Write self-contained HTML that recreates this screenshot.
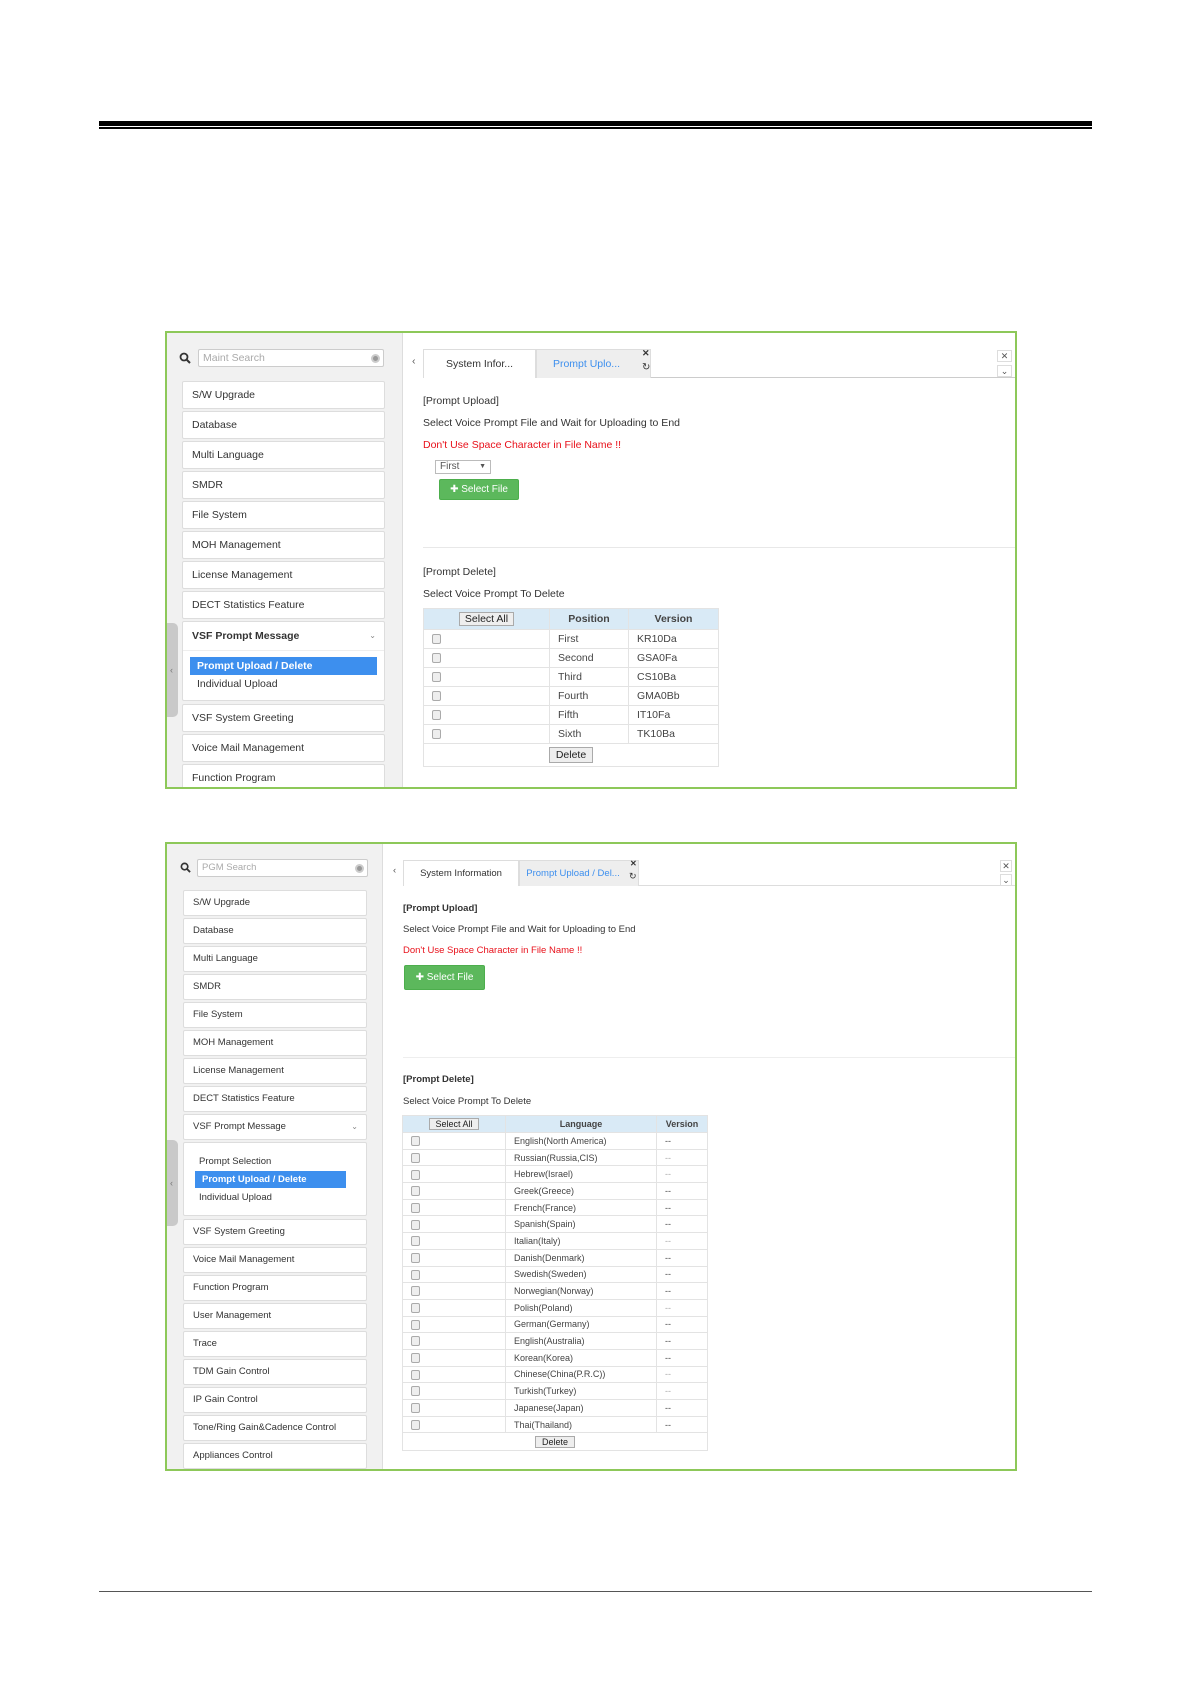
<!DOCTYPE html>
<html><head><meta charset="utf-8"><style>
*{box-sizing:border-box;margin:0;padding:0}
body{width:1191px;height:1684px;background:#fff;position:relative;font-family:"Liberation Sans",Arial,sans-serif;color:#333;overflow:hidden}
.a{position:absolute}
.panel{position:absolute;left:165px;width:852px;border:2px solid #8dc859;overflow:hidden;background:#fff}
.side{position:absolute;left:0;top:0;bottom:0;background:#f1f1f1;border-right:1px solid #ddd}
.srch{position:absolute;background:#fff;border:1px solid #ccc;border-radius:2px;color:#aaa;padding-left:4px}
.srch i{position:absolute;right:3px;top:4px;width:9px;height:9px;border-radius:50%;background:#999;border:2px solid #ccc}
.mi{position:absolute;background:#fff;border:1px solid #ddd;border-radius:2px;padding-left:9px;color:#333}
.hl{position:absolute;background:#3d8fee;color:#fff;font-weight:bold;padding-left:7px}
.handle{position:absolute;left:-2px;width:13px;background:#c9c9c9;border-radius:0 5px 5px 0;color:#777;font-size:9px;text-align:center}
.tab{position:absolute;border:1px solid #ddd;border-bottom:none;background:#fff;text-align:center}
.tab2{background:#eee;color:#3d8fee}
.cb{position:absolute;width:15px;height:12px;border:1px solid #ddd;font-size:9px;text-align:center;line-height:10px;color:#555}
.t{position:absolute;white-space:nowrap}
.red{color:#e8101a}
.btn{position:absolute;background:#5cb85c;border:1px solid #4cae4c;border-radius:2px;color:#fff;text-align:center}
table{position:absolute;border-collapse:collapse;background:#fff}
td,th{border:1px solid #e3e3e3;padding:0 0 0 8px;text-align:left;font-weight:normal;color:#444}
th{background:#d9eaf6;font-weight:bold;text-align:center;padding:0}
.chk{display:inline-block;width:9px;height:10px;border:1px solid #aaa;border-radius:2px;background:#eee;vertical-align:middle}
.gb{display:inline-block;background:#eee;border:1px solid #aaa;padding:0 5px;font-weight:normal;color:#222}
</style></head><body>
<div class="a" style="left:99px;top:121px;width:993px;height:5px;background:#000"></div>
<div class="a" style="left:99px;top:127px;width:993px;height:2px;background:#000"></div>
<div class="a" style="left:99px;top:1591px;width:993px;height:1px;background:#555"></div>

<!-- PANEL 1 -->
<div class="panel" style="top:331px;height:458px;font-size:10.5px">
 <div class="side" style="width:236px"></div>
 <svg class="a" style="left:12px;top:19px" width="12" height="12" viewBox="0 0 12 12"><circle cx="5" cy="5" r="3.5" fill="none" stroke="#333" stroke-width="1.8"/><line x1="7.5" y1="7.5" x2="11" y2="11" stroke="#333" stroke-width="2"/></svg>
 <div class="srch" style="left:31px;top:16px;width:186px;height:18px;line-height:16px">Maint Search<i></i></div>
 <div class="mi" style="left:15px;top:48px;width:203px;height:28px;line-height:26px">S/W Upgrade</div>
 <div class="mi" style="left:15px;top:78px;width:203px;height:28px;line-height:26px">Database</div>
 <div class="mi" style="left:15px;top:108px;width:203px;height:28px;line-height:26px">Multi Language</div>
 <div class="mi" style="left:15px;top:138px;width:203px;height:28px;line-height:26px">SMDR</div>
 <div class="mi" style="left:15px;top:168px;width:203px;height:28px;line-height:26px">File System</div>
 <div class="mi" style="left:15px;top:198px;width:203px;height:28px;line-height:26px">MOH Management</div>
 <div class="mi" style="left:15px;top:228px;width:203px;height:28px;line-height:26px">License Management</div>
 <div class="mi" style="left:15px;top:258px;width:203px;height:28px;line-height:26px">DECT Statistics Feature</div>
 <div class="mi" style="left:15px;top:288px;width:203px;height:80px"><div style="font-weight:bold;line-height:28px;border-bottom:1px solid #eee;margin-left:-9px;padding-left:9px">VSF Prompt Message<span style="position:absolute;right:8px;font-weight:normal;font-size:8px;color:#888">&#8964;</span></div></div>
 <div class="hl" style="left:23px;top:324px;width:187px;height:18px;line-height:18px">Prompt Upload / Delete</div>
 <div class="t" style="left:30px;top:345px">Individual Upload</div>
 <div class="mi" style="left:15px;top:371px;width:203px;height:28px;line-height:26px">VSF System Greeting</div>
 <div class="mi" style="left:15px;top:401px;width:203px;height:28px;line-height:26px">Voice Mail Management</div>
 <div class="mi" style="left:15px;top:431px;width:203px;height:28px;line-height:26px">Function Program</div>
 <div class="handle" style="top:290px;height:94px;line-height:94px">&#8249;</div>

 <div class="t" style="left:245px;top:22px;color:#555">&#8249;</div>
 <div class="a" style="left:256px;top:44px;width:592px;height:1px;background:#ccc"></div>
 <div class="tab" style="left:256px;top:16px;width:113px;height:29px;line-height:28px">System Infor...</div>
 <div class="tab tab2" style="left:369px;top:16px;width:115px;height:29px;line-height:28px;padding-right:14px">Prompt Uplo...</div>
 <div class="t" style="left:475px;top:15px;font-size:9px;font-weight:bold">&#10005;</div>
 <div class="t" style="left:475px;top:29px;font-size:10px">&#8635;</div>
 <div class="cb" style="left:830px;top:17px">&#10005;</div>
 <div class="cb" style="left:830px;top:32px">&#8964;</div>

 <div class="t" style="left:256px;top:62px">[Prompt Upload]</div>
 <div class="t" style="left:256px;top:84px">Select Voice Prompt File and Wait for Uploading to End</div>
 <div class="t red" style="left:256px;top:106px">Don't Use Space Character in File Name !!</div>
 <div class="a" style="left:268px;top:127px;width:56px;height:14px;border:1px solid #bbb;font-size:10px;line-height:12px;padding-left:4px;color:#555">First<span style="position:absolute;right:4px;font-size:7px">&#9660;</span></div>
 <div class="btn" style="left:272px;top:146px;width:80px;height:21px;line-height:19px;font-size:10px">&#10010; Select File</div>
 <div class="a" style="left:256px;top:214px;width:594px;height:1px;background:#e8e8e8"></div>
 <div class="t" style="left:256px;top:233px">[Prompt Delete]</div>
 <div class="t" style="left:256px;top:255px">Select Voice Prompt To Delete</div>
 <table style="left:256px;top:275px;width:296px;font-size:10.5px">
  <tr style="height:21px"><th style="width:126px"><span class="gb">Select All</span></th><th style="width:79px">Position</th><th>Version</th></tr>
  <tr style="height:19px"><td><span class="chk"></span></td><td>First</td><td>KR10Da</td></tr>
  <tr style="height:19px"><td><span class="chk"></span></td><td>Second</td><td>GSA0Fa</td></tr>
  <tr style="height:19px"><td><span class="chk"></span></td><td>Third</td><td>CS10Ba</td></tr>
  <tr style="height:19px"><td><span class="chk"></span></td><td>Fourth</td><td>GMA0Bb</td></tr>
  <tr style="height:19px"><td><span class="chk"></span></td><td>Fifth</td><td>IT10Fa</td></tr>
  <tr style="height:19px"><td><span class="chk"></span></td><td>Sixth</td><td>TK10Ba</td></tr>
  <tr style="height:23px"><td colspan="3" style="text-align:center;padding:0"><span class="gb" style="padding:1px 6px">Delete</span></td></tr>
 </table>
</div>

<!-- PANEL 2 -->
<div class="panel" style="top:842px;height:629px;font-size:9.5px">
 <div class="side" style="width:216px"></div>
 <svg class="a" style="left:13px;top:18px" width="11" height="11" viewBox="0 0 12 12"><circle cx="5" cy="5" r="3.5" fill="none" stroke="#333" stroke-width="1.8"/><line x1="7.5" y1="7.5" x2="11" y2="11" stroke="#333" stroke-width="2"/></svg>
 <div class="srch" style="left:30px;top:15px;width:171px;height:18px;line-height:16px">PGM Search<i></i></div>
 <div class="mi" style="left:16px;top:46px;width:184px;height:26px;line-height:24px">S/W Upgrade</div>
 <div class="mi" style="left:16px;top:74px;width:184px;height:26px;line-height:24px">Database</div>
 <div class="mi" style="left:16px;top:102px;width:184px;height:26px;line-height:24px">Multi Language</div>
 <div class="mi" style="left:16px;top:130px;width:184px;height:26px;line-height:24px">SMDR</div>
 <div class="mi" style="left:16px;top:158px;width:184px;height:26px;line-height:24px">File System</div>
 <div class="mi" style="left:16px;top:186px;width:184px;height:26px;line-height:24px">MOH Management</div>
 <div class="mi" style="left:16px;top:214px;width:184px;height:26px;line-height:24px">License Management</div>
 <div class="mi" style="left:16px;top:242px;width:184px;height:26px;line-height:24px">DECT Statistics Feature</div>
 <div class="mi" style="left:16px;top:270px;width:184px;height:26px;line-height:24px">VSF Prompt Message<span style="position:absolute;right:8px;font-size:8px;color:#888">&#8964;</span></div>
 <div class="mi" style="left:16px;top:298px;width:184px;height:74px"></div>
 <div class="t" style="left:32px;top:312px">Prompt Selection</div>
 <div class="hl" style="left:28px;top:327px;width:151px;height:17px;line-height:17px">Prompt Upload / Delete</div>
 <div class="t" style="left:32px;top:348px">Individual Upload</div>
 <div class="mi" style="left:16px;top:375px;width:184px;height:26px;line-height:24px">VSF System Greeting</div>
 <div class="mi" style="left:16px;top:403px;width:184px;height:26px;line-height:24px">Voice Mail Management</div>
 <div class="mi" style="left:16px;top:431px;width:184px;height:26px;line-height:24px">Function Program</div>
 <div class="mi" style="left:16px;top:459px;width:184px;height:26px;line-height:24px">User Management</div>
 <div class="mi" style="left:16px;top:487px;width:184px;height:26px;line-height:24px">Trace</div>
 <div class="mi" style="left:16px;top:515px;width:184px;height:26px;line-height:24px">TDM Gain Control</div>
 <div class="mi" style="left:16px;top:543px;width:184px;height:26px;line-height:24px">IP Gain Control</div>
 <div class="mi" style="left:16px;top:571px;width:184px;height:26px;line-height:24px">Tone/Ring Gain&amp;Cadence Control</div>
 <div class="mi" style="left:16px;top:599px;width:184px;height:26px;line-height:24px">Appliances Control</div>
 <div class="handle" style="top:296px;height:86px;line-height:86px">&#8249;</div>

 <div class="t" style="left:226px;top:21px;color:#555">&#8249;</div>
 <div class="a" style="left:236px;top:41px;width:614px;height:1px;background:#ddd"></div>
 <div class="tab" style="left:236px;top:16px;width:116px;height:26px;line-height:25px">System Information</div>
 <div class="tab tab2" style="left:352px;top:16px;width:120px;height:26px;line-height:25px;padding-right:12px">Prompt Upload / Del...</div>
 <div class="t" style="left:463px;top:15px;font-size:8px;font-weight:bold">&#10005;</div>
 <div class="t" style="left:462px;top:27px;font-size:9px">&#8635;</div>
 <div class="cb" style="left:833px;top:16px;width:12px">&#10005;</div>
 <div class="cb" style="left:833px;top:30px;width:12px">&#8964;</div>

 <div class="t" style="left:236px;top:59px;font-weight:bold">[Prompt Upload]</div>
 <div class="t" style="left:236px;top:80px">Select Voice Prompt File and Wait for Uploading to End</div>
 <div class="t red" style="left:236px;top:101px">Don't Use Space Character in File Name !!</div>
 <div class="btn" style="left:237px;top:121px;width:81px;height:25px;line-height:23px;font-size:10px">&#10010; Select File</div>
 <div class="a" style="left:236px;top:213px;width:614px;height:1px;background:#eee"></div>
 <div class="t" style="left:236px;top:230px;font-weight:bold">[Prompt Delete]</div>
 <div class="t" style="left:236px;top:252px">Select Voice Prompt To Delete</div>
 <table style="left:235px;top:271px;width:306px;font-size:9px">
  <tr style="height:17px"><th style="width:103px"><span class="gb">Select All</span></th><th style="width:151px">Language</th><th>Version</th></tr>
  <tr style="height:16.7px"><td><span class="chk"></span></td><td>English(North America)</td><td>--</td></tr>
  <tr style="height:16.7px"><td><span class="chk"></span></td><td>Russian(Russia,CIS)</td><td style="color:#aaa">--</td></tr>
  <tr style="height:16.7px"><td><span class="chk"></span></td><td>Hebrew(Israel)</td><td style="color:#aaa">--</td></tr>
  <tr style="height:16.7px"><td><span class="chk"></span></td><td>Greek(Greece)</td><td>--</td></tr>
  <tr style="height:16.7px"><td><span class="chk"></span></td><td>French(France)</td><td>--</td></tr>
  <tr style="height:16.7px"><td><span class="chk"></span></td><td>Spanish(Spain)</td><td>--</td></tr>
  <tr style="height:16.7px"><td><span class="chk"></span></td><td>Italian(Italy)</td><td style="color:#aaa">--</td></tr>
  <tr style="height:16.7px"><td><span class="chk"></span></td><td>Danish(Denmark)</td><td>--</td></tr>
  <tr style="height:16.7px"><td><span class="chk"></span></td><td>Swedish(Sweden)</td><td>--</td></tr>
  <tr style="height:16.7px"><td><span class="chk"></span></td><td>Norwegian(Norway)</td><td>--</td></tr>
  <tr style="height:16.7px"><td><span class="chk"></span></td><td>Polish(Poland)</td><td style="color:#aaa">--</td></tr>
  <tr style="height:16.7px"><td><span class="chk"></span></td><td>German(Germany)</td><td>--</td></tr>
  <tr style="height:16.7px"><td><span class="chk"></span></td><td>English(Australia)</td><td>--</td></tr>
  <tr style="height:16.7px"><td><span class="chk"></span></td><td>Korean(Korea)</td><td>--</td></tr>
  <tr style="height:16.7px"><td><span class="chk"></span></td><td>Chinese(China(P.R.C))</td><td style="color:#aaa">--</td></tr>
  <tr style="height:16.7px"><td><span class="chk"></span></td><td>Turkish(Turkey)</td><td style="color:#aaa">--</td></tr>
  <tr style="height:16.7px"><td><span class="chk"></span></td><td>Japanese(Japan)</td><td>--</td></tr>
  <tr style="height:16.7px"><td><span class="chk"></span></td><td>Thai(Thailand)</td><td>--</td></tr>
  <tr style="height:18px"><td colspan="3" style="text-align:center;padding:0"><span class="gb" style="padding:0 6px">Delete</span></td></tr>
 </table>
</div>
</body></html>
